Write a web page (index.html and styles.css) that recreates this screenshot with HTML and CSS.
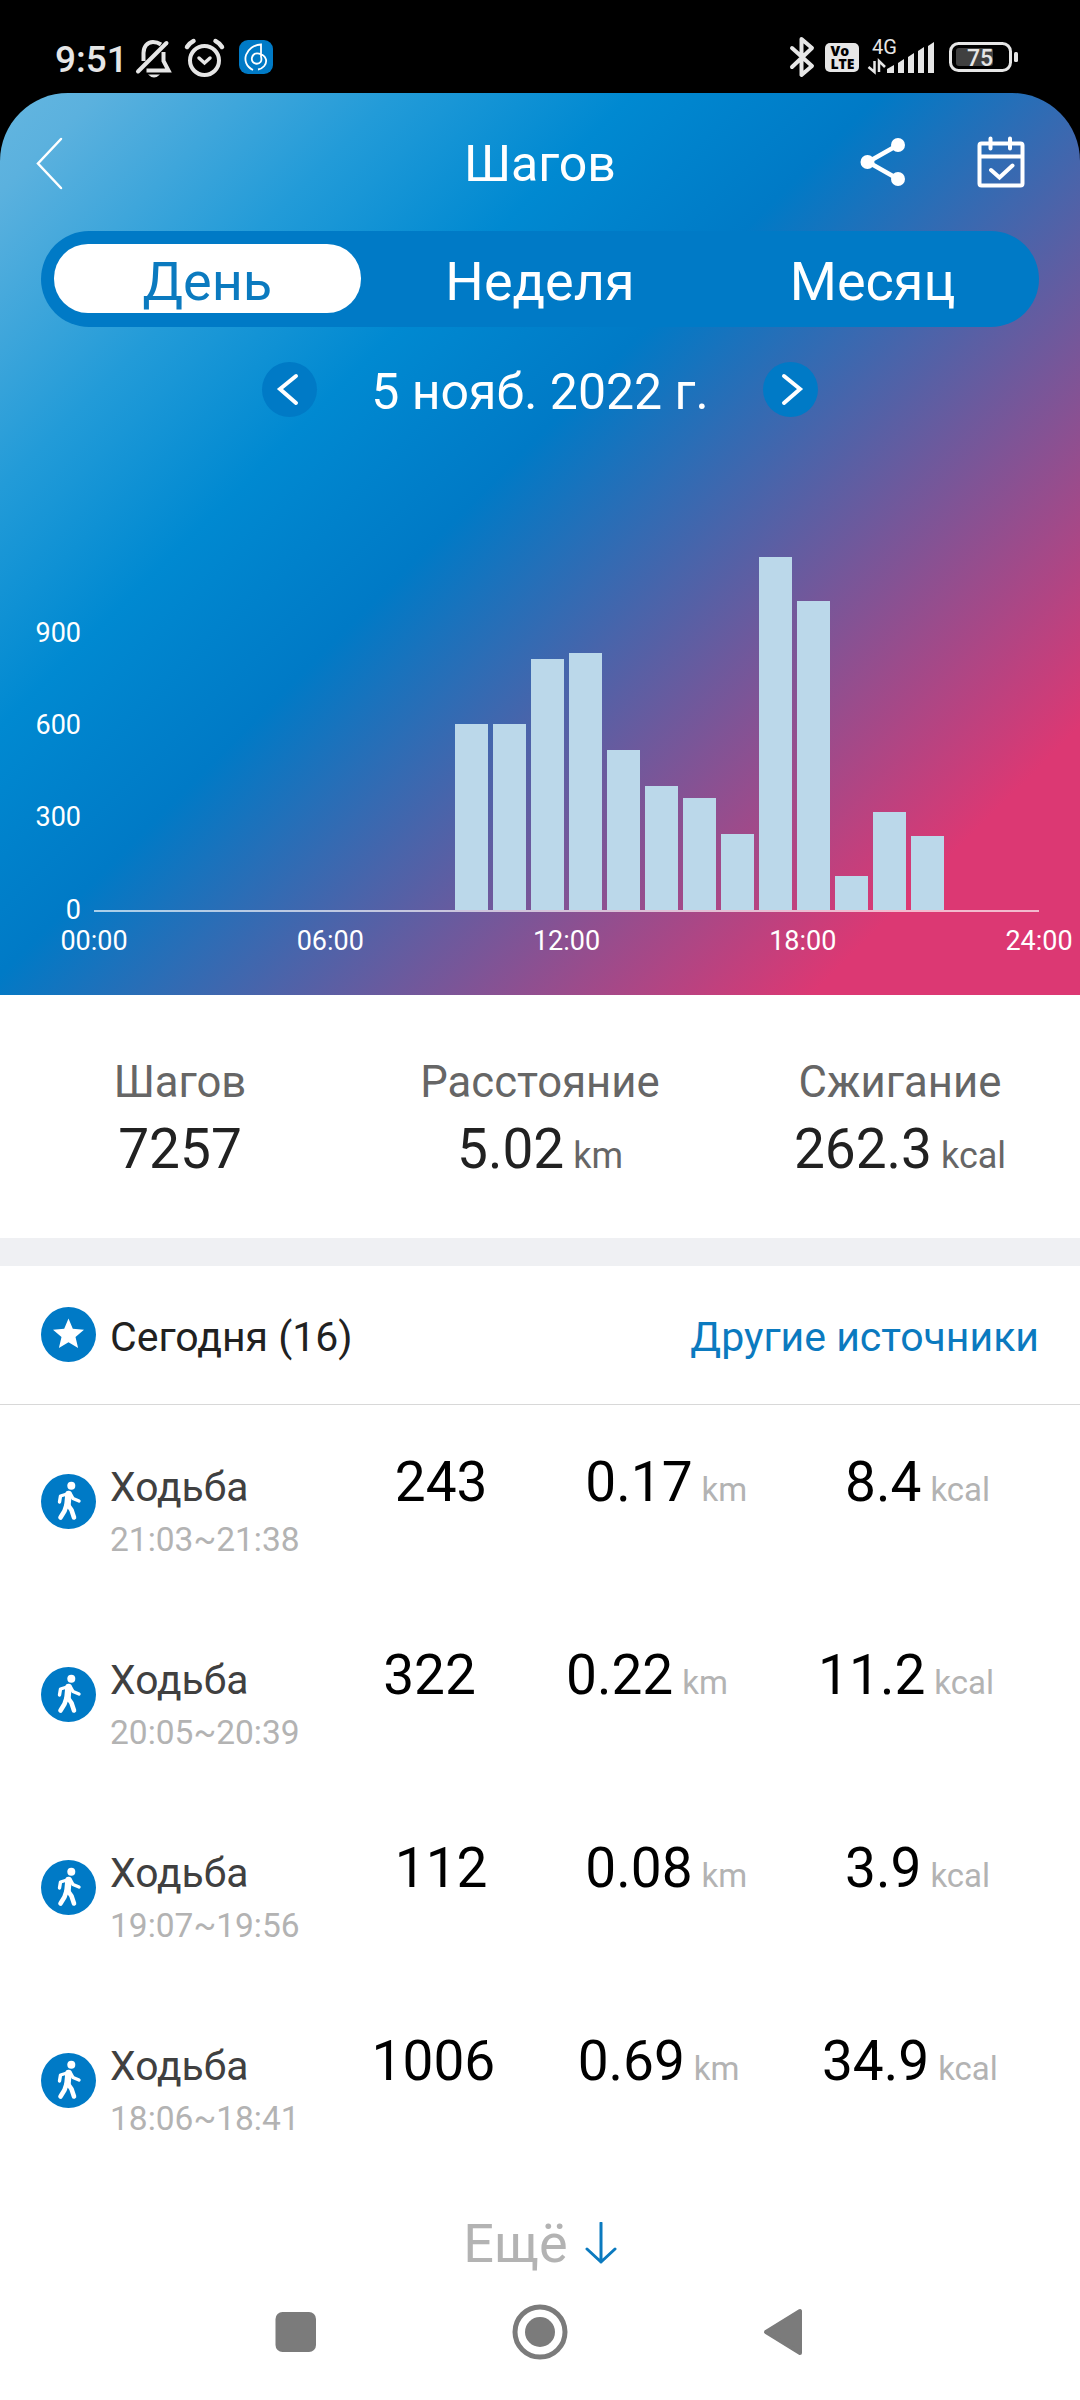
FILE: index.html
```
<!DOCTYPE html>
<html lang="ru">
<head>
    <meta charset="UTF-8">
    <meta name="viewport" content="width=device-width, initial-scale=1.0">
    <title>Шагов</title>
    <link rel="stylesheet" href="styles.css">
</head>
<body>
    <div class="status-bar">
        <span class="clock">9:51</span>
        <svg class="status-left" width="140" height="44" viewBox="135 37 140 44">
            <g fill="none" stroke="#e6e6e6" stroke-width="4">
                <path d="M161 44.500c-3-2-5-2.500-8-2.500c-6 0-9.500 5-9.500 11v8"/>
                <path d="M163.500 52v9l5 9.500h-22"/>
                <path d="M138 71.500l28.500-28.500" stroke-linecap="round"/>
                <circle cx="204.500" cy="60.500" r="14.500"/>
                <path d="M199 58l5.500 5l5.500-5" stroke-width="3.500" stroke-linecap="round"/>
                <path d="M187 47q2.500-4 6.500-6M222 47q-2.500-4-6.500-6" stroke-width="4.500" stroke-linecap="round"/>
            </g>
            <path d="M148 74.500h12q-6 6-12 0z" fill="#e6e6e6"/>
            <rect x="239" y="40" width="34" height="34" rx="9" fill="#007ac6"/>
            <path d="M253 70c-14-7-7-25 8-25.500v12c3 10-11 9-9 1c2-7 12-4 14 2c1 5-3 9-8 10" fill="none" stroke="#fff" stroke-width="1.800"/>
        </svg>
        <svg class="status-right" width="230" height="50" viewBox="789 29 230 50">
            <path d="M792 48l20 18l-10.500 9v-36l10.500 9l-20 19" fill="none" stroke="#e6e6e6" stroke-width="4" stroke-linejoin="round" stroke-linecap="round"/>
            <rect x="825" y="43" width="34" height="29" rx="5" fill="#e6e6e6"/>
            <text class="volte" x="830.500" y="55.500">Vo</text>
            <text class="volte" x="830.500" y="69" textLength="24">LTE</text>
            <text class="network" x="872" y="54">4G</text>
            <path d="M874.500 61v11l-6-5M879 72v-11l6 6" fill="none" stroke="#e6e6e6" stroke-width="2.500"/>
            <path d="M887 73v-4l7-4v8zM898 73v-10l6-4v14zM908 73v-16l6-4v20zM918 73v-22l6-4v26zM928 73v-27l6-4v31z" fill="#e6e6e6"/>
            <rect x="950.500" y="43.500" width="60" height="27" rx="8" fill="none" stroke="#e6e6e6" stroke-width="3"/>
            <rect x="956" y="48" width="37" height="18" rx="3" fill="#404040"/>
            <rect x="1014" y="52" width="4" height="10" rx="1.500" fill="#e6e6e6"/>
            <text class="battery" x="967" y="66">75</text>
        </svg>
    </div>

    <div class="screen-top">
        <div class="hero">
            <div class="header">
                <svg class="back" width="28" height="54" viewBox="0 0 28 54"><path d="M25 2L2 26.500L25 51" fill="none" stroke="#fff" stroke-width="2.500" stroke-linecap="round"/></svg>
                <h1>Шагов</h1>
                <div class="actions">
                    <svg width="46" height="50" viewBox="0 0 46 50">
                        <path d="M38 8L8 25L38 42" fill="none" stroke="#fff" stroke-width="4.500"/>
                        <circle cx="38" cy="8" r="7" fill="#fff"/>
                        <circle cx="7.500" cy="25" r="7" fill="#fff"/>
                        <circle cx="38" cy="42" r="7" fill="#fff"/>
                    </svg>
                    <svg width="48" height="52" viewBox="0 0 48 52">
                        <g fill="none" stroke="#fff" stroke-width="4" stroke-linecap="round">
                            <rect x="2.500" y="7.500" width="43" height="42" rx="2"/>
                            <path d="M3 20.500h42M13.500 2.500v10M33 2.500v10M14 34l8.500 7.500l13-12"/>
                        </g>
                    </svg>
                </div>
            </div>

            <div class="tabs">
                <span class="tab active">День</span>
                <span class="tab">Неделя</span>
                <span class="tab">Месяц</span>
            </div>

            <div class="date-row">
                <span class="arrow"><svg width="55" height="55" viewBox="0 0 55 55"><path d="M34 14L18 27L34 41"/></svg></span>
                <span class="date">5 нояб. 2022 г.</span>
                <span class="arrow"><svg width="55" height="55" viewBox="0 0 55 55"><path d="M21 14L37 27L21 41"/></svg></span>
            </div>

            <div class="chart">
                <div class="y-axis">
                    <span>900</span>
                    <span>600</span>
                    <span>300</span>
                    <span>0</span>
                </div>
                <div class="plot">
                    <div class="bar" style="height:186px"></div>
                    <div class="bar" style="height:186px"></div>
                    <div class="bar" style="height:251px"></div>
                    <div class="bar" style="height:257px"></div>
                    <div class="bar" style="height:160px"></div>
                    <div class="bar" style="height:124px"></div>
                    <div class="bar" style="height:112px"></div>
                    <div class="bar" style="height:76px"></div>
                    <div class="bar" style="height:353px"></div>
                    <div class="bar" style="height:309px"></div>
                    <div class="bar" style="height:34px"></div>
                    <div class="bar" style="height:98px"></div>
                    <div class="bar" style="height:74px"></div>
                </div>
            </div>
            <div class="x-axis">
                <span>00:00</span>
                <span>06:00</span>
                <span>12:00</span>
                <span>18:00</span>
                <span>24:00</span>
            </div>
        </div>
    </div>

    <div class="totals">
        <div class="total">
            <p class="label">Шагов</p>
            <p class="value">7257</p>
        </div>
        <div class="total">
            <p class="label">Расстояние</p>
            <p class="value">5.02<small>km</small></p>
        </div>
        <div class="total">
            <p class="label">Сжигание</p>
            <p class="value">262.3<small>kcal</small></p>
        </div>
    </div>

    <div class="section-head">
        <svg class="badge" viewBox="0 0 55 55">
            <circle cx="27.500" cy="27.500" r="27.500" fill="#007ac6"/>
            <path d="M27.500 11.500l4.300 10.200l11.200 1l-8.500 7.300l2.600 11l-9.600-5.800l-9.600 5.800l2.600-11l-8.500-7.300l11.200-1z" fill="#fff"/>
        </svg>
        <span class="today">Сегодня (16)</span>
        <a class="sources">Другие источники</a>
    </div>

    <svg width="0" height="0" class="defs">
        <symbol id="walk" viewBox="0 0 55 55">
            <circle cx="27.500" cy="27.500" r="27.500" fill="#007ac6"/>
            <circle cx="30.300" cy="11.800" r="4" fill="#fff"/>
            <g fill="none" stroke="#fff" stroke-linecap="round" stroke-linejoin="round">
                <path d="M26 20l-6.500 2l-1 6" stroke-width="3.400"/>
                <path d="M29.500 20l2.500 4.500l6 2.500" stroke-width="3.400"/>
                <path d="M27.500 20l-1 10.500" stroke-width="6.500"/>
                <path d="M25.500 31l-2 6l-4 6.500M27 31l3.500 5l2.500 7.500" stroke-width="4.600"/>
            </g>
        </symbol>
    </svg>

    <div class="list">
        <div class="row">
            <svg class="badge"><use href="#walk"/></svg>
            <div class="info"><p>Ходьба</p><time>21:03~21:38</time></div>
            <span class="num">243</span>
            <span class="num">0.17<small>km</small></span>
            <span class="num">8.4<small>kcal</small></span>
        </div>
        <div class="row">
            <svg class="badge"><use href="#walk"/></svg>
            <div class="info"><p>Ходьба</p><time>20:05~20:39</time></div>
            <span class="num">322</span>
            <span class="num">0.22<small>km</small></span>
            <span class="num">11.2<small>kcal</small></span>
        </div>
        <div class="row">
            <svg class="badge"><use href="#walk"/></svg>
            <div class="info"><p>Ходьба</p><time>19:07~19:56</time></div>
            <span class="num">112</span>
            <span class="num">0.08<small>km</small></span>
            <span class="num">3.9<small>kcal</small></span>
        </div>
        <div class="row">
            <svg class="badge"><use href="#walk"/></svg>
            <div class="info"><p>Ходьба</p><time>18:06~18:41</time></div>
            <span class="num">1006</span>
            <span class="num">0.69<small>km</small></span>
            <span class="num">34.9<small>kcal</small></span>
        </div>
    </div>

    <div class="more">
        <span>Ещё</span>
        <svg width="32" height="42" viewBox="0 0 32 42"><path d="M16 1v39M2 27l14 13l14-13" fill="none" stroke="#0b7abf" stroke-width="3" stroke-linecap="round" stroke-linejoin="round"/></svg>
    </div>

    <div class="nav">
        <svg width="530" height="56" viewBox="275 2304 530 56" fill="#7b7b7b">
            <rect x="275.500" y="2312" width="40.500" height="40" rx="7"/>
            <circle cx="540" cy="2332" r="25" fill="none" stroke="#7b7b7b" stroke-width="5"/>
            <circle cx="540" cy="2332" r="15"/>
            <path d="M800 2311v42l-34-21z" stroke="#7b7b7b" stroke-width="4" stroke-linejoin="round"/>
        </svg>
    </div>
</body>
</html>
```
FILE: styles.css
```
*{
    box-sizing: border-box;
}
body{
    margin: 0;
    width: 1080px;
    height: 2400px;
    overflow: hidden;
    background-color: white;
    font-family: Roboto, "Noto Sans", sans-serif;
    color: #212121;
}
p, h1{
    margin: 0;
    font-weight: normal;
}
svg{
    display: block;
    flex: none;
}
.defs{
    position: absolute;
}

/* status bar */
.status-bar{
    display: flex;
    height: 93px;
    padding: 37px 61px 0 55px;
    background-color: black;
    color: #e6e6e6;
}
.clock{
    width: 80px;
    font-size: 37px;
    font-weight: 500;
    line-height: 45px;
}
.status-right{
    margin-top: -8px;
    margin-left: auto;
}
.volte{
    font: 800 14px "Open Sans", sans-serif;
    fill: black;
}
.network{
    font-size: 20px;
    fill: #e6e6e6;
}
.battery{
    font-size: 23px;
    font-weight: 500;
    fill: #e6e6e6;
}

/* blue to pink top part */
.screen-top{
    background-color: black;
}
.hero{
    height: 902px;
    border-radius: 68px 68px 0 0;
    background: linear-gradient(135deg, #64b6e0 0%, #5bb1de 5%, #229bd8 20%, #0089d1 32%, #007ac6 44.500%, #dc3873 86.500%);
    color: white;
}
.header{
    display: grid;
    grid-template-columns: 1fr auto 1fr;
    align-items: center;
    height: 138px;
    padding: 0 55px;
}
.back{
    margin: 4px 0 0 -19px;
}
.header h1{
    padding-top: 4px;
    font-size: 50px;
    line-height: 60px;
}
.actions{
    display: flex;
    align-items: center;
    justify-content: flex-end;
    gap: 71px;
}
.tabs{
    display: grid;
    grid-template-columns: repeat(3, 1fr);
    height: 96px;
    margin: 0 41px;
    border-radius: 48px;
    background-color: #007ac6;
}
.tab{
    margin: 13px 13px 14px;
    padding-top: 6px;
    border-radius: 34px;
    text-align: center;
    font-size: 54px;
    line-height: 63px;
}
.tab.active{
    background-color: white;
    color: #0b7abf;
}
.date-row{
    display: flex;
    align-items: center;
    justify-content: space-between;
    height: 55px;
    margin: 35px 262px 0;
}
.arrow{
    border-radius: 50%;
    background-color: #007ac6;
}
.arrow path{
    fill: none;
    stroke: white;
    stroke-width: 4;
    stroke-linecap: round;
}
.date{
    padding-top: 4px;
    font-size: 50px;
    line-height: 60px;
}

/* chart */
.chart{
    display: flex;
    height: 495px;
    font-size: 27px;
}
.y-axis{
    display: flex;
    flex-direction: column;
    justify-content: flex-end;
    width: 81px;
    margin-bottom: -44px;
    text-align: right;
    line-height: 92.300px;
}
.plot{
    display: flex;
    align-items: flex-end;
    gap: 5px;
    width: 945px;
    margin-left: 13px;
    padding-left: 361px;
    border-bottom: 2px solid rgba(255,255,255,.65);
}
.bar{
    width: 33px;
    background-color: #bbd8ea;
}
.x-axis{
    display: flex;
    justify-content: space-between;
    width: 1025px;
    margin-left: 54px;
    font-size: 27px;
    line-height: 58px;
}
.x-axis span{
    width: 80px;
    text-align: center;
}

/* totals */
.totals{
    display: grid;
    grid-template-columns: repeat(3, 1fr);
    height: 271px;
    padding-top: 55px;
    border-bottom: 28px solid #eff0f3;
    text-align: center;
}
.label{
    font-size: 43.700px;
    line-height: 64px;
    color: #666;
}
.value{
    font-size: 55px;
    line-height: 70px;
}
.value small{
    margin-left: 9px;
    font-size: 36px;
    color: #666;
}

/* list */
.section-head{
    display: flex;
    align-items: center;
    height: 139px;
    padding: 0 41px 2px;
    border-bottom: 1px solid #d8d8d8;
    font-size: 41px;
}
.today, .sources{
    padding-top: 5px;
}
.badge{
    width: 55px;
    height: 55px;
    margin-right: 14px;
}
.sources{
    margin-left: auto;
    color: #0b7abf;
}
.row{
    display: flex;
    height: 193px;
    padding: 0 41px;
}
.row .badge{
    margin-top: 69px;
}
.info{
    flex: 1 1 138px;
    padding-top: 54px;
    font-size: 40.800px;
    line-height: 56px;
    color: #404040;
    white-space: nowrap;
}
.info time{
    display: block;
    font-size: 33.500px;
    line-height: 49px;
    color: #b3b3b3;
}
.num{
    flex: 1 1 auto;
    padding-top: 44px;
    text-align: center;
    font-size: 55px;
    line-height: 66px;
    color: black;
    white-space: nowrap;
}
.num small{
    margin-left: 9px;
    font-size: 33px;
    color: #b3b3b3;
}
.more{
    display: flex;
    align-items: center;
    justify-content: center;
    gap: 17px;
    height: 132px;
    font-size: 54px;
    color: #b3b3b3;
}
.nav svg{
    margin: -5px auto 0;
}
```
